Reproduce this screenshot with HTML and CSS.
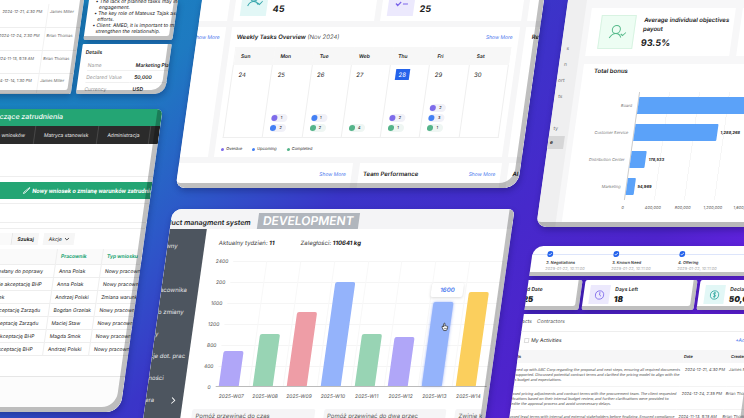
FILE: index.html
```html
<!DOCTYPE html>
<html lang="en">
<head>
    <meta charset="UTF-8">
    <meta name="viewport" content="width=device-width, initial-scale=1.0">
    <title>Dashboards</title>
    <link rel="stylesheet" href="styles.css">
</head>
<body>

<main class="wall">

    <!-- left column -->
    <div class="column column-left">
        <div class="split">
            <section class="panel log-panel">
                <table class="log-table">
                    <tr><td>2024-12-21, 4:30 PM</td><td>James Miller</td></tr>
                    <tr><td>2024-12-24, 2:30 PM</td><td>Brian Thomas</td></tr>
                    <tr><td>2024-11-13, 9:15 AM</td><td>Brian Thomas</td></tr>
                    <tr><td>2024-12-14, 1:30 PM</td><td>James Miller</td></tr>
                </table>
            </section>
            <div class="split-right">
                <section class="panel notes-panel">
                    <ul>
                        <li>The lack of planned tasks may indicate a<br>engagement.</li>
                        <li>The key role of Mateusz Tajak as the sales<br>efforts.</li>
                        <li>Client: AMED, it is important to maintain c<br>strengthen the relationship.</li>
                    </ul>
                </section>
                <section class="panel details-panel">
                    <h2>Details</h2>
                    <dl>
                        <dt>Name</dt><dd>Marketing Platform</dd>
                        <dt>Declared Value</dt><dd>50,000</dd>
                        <dt>Currency</dt><dd>USD</dd>
                    </dl>
                </section>
            </div>
        </div>

        <section class="panel hr-panel">
            <header class="hr-header">czące zatrudnienia</header>
            <nav class="hr-nav">
                <a href="#">Lista wniosków</a>
                <a href="#">Matryca stanowisk</a>
                <a href="#">Administracja</a>
            </nav>
            <div class="hr-space"></div>
            <button class="hr-new">
                <svg width="7" height="7" viewBox="0 0 14 14"><path d="M1 13l1-3 10-9 1 1-9 10z" fill="none" stroke="#fff" stroke-width="1.5"/></svg>
                Nowy wniosek o zmianę warunków zatrudnienia
            </button>
            <div class="hr-line"></div>
            <div class="hr-search">
                <input type="text" aria-label="Szukaj wniosku">
                <button class="search-button">Szukaj</button>
                <button class="actions-button">Akcje
                    <svg width="5" height="4" viewBox="0 0 10 8"><path d="M1 2l4 4 4-4" fill="none" stroke="#333" stroke-width="1.6"/></svg>
                </button>
            </div>
            <table class="hr-table">
                <tr><th></th><th>Pracownik</th><th>Typ wniosku</th></tr>
                <tr><td>Nie odesłany do poprawy</td><td>Anna Polak</td><td>Nowy pracownik</td></tr>
                <tr><td>Oczekuje akceptację BHP</td><td>Anna Polak</td><td>Nowy pracownik</td></tr>
                <tr><td>Przypadek</td><td>Andrzej Polski</td><td>Zmiana warunków</td></tr>
                <tr><td>Czeka akceptację Zarządu</td><td>Bogdan Grzelak</td><td>Nowy pracownik</td></tr>
                <tr><td>Czeka akceptację Zarządu</td><td>Maciej Staw</td><td>Nowy pracownik</td></tr>
                <tr><td>Oczekuje akceptację BHP</td><td>Magda Smok</td><td>Nowy pracownik</td></tr>
                <tr><td>Oczekuje akceptację BHP</td><td>Andrzej Polski</td><td>Nowy pracownik</td></tr>
            </table>
            <div class="hr-footer"></div>
        </section>
    </div>

    <!-- middle column -->
    <div class="column column-middle">
        <section class="panel tasks-panel">
            <div class="tasks-side">
                <div class="card stat-blank"></div>
                <div class="card side-card"><a class="more" href="#">Show More</a></div>
            </div>
            <div class="tasks-main">
                <div class="stats">
                    <div class="card stat">
                        <div class="stat-icon teal">
                            <svg width="16" height="16" viewBox="0 0 32 32" fill="none" stroke="#35a5ab" stroke-width="2"><circle cx="14" cy="10" r="8"/><path d="M3 28c2-6 6-9 11-9s8 3 9 6M22 22l4 3 6-7"/></svg>
                        </div>
                        <strong>45</strong>
                    </div>
                    <div class="card stat">
                        <div class="stat-icon violet">
                            <svg width="16" height="16" viewBox="0 0 32 32" fill="none" stroke="#7c66ea" stroke-width="2.4"><path d="M5 8l4 4 6-7M19 9h10M5 23l4 4 6-7M19 24h10"/></svg>
                        </div>
                        <strong>25</strong>
                    </div>
                </div>
                <div class="card calendar-card">
                    <div class="card-head">
                        <h2>Weekly Tasks Overview <span>(Nov 2024)</span></h2>
                        <a class="more" href="#">Show More</a>
                    </div>
                    <table class="calendar">
                        <tr><th>Sun</th><th>Mon</th><th>Tue</th><th>Web</th><th>Thu</th><th>Fri</th><th>Sat</th></tr>
                        <tr>
                            <td><div class="day"><span class="date">24</span></div></td>
                            <td><div class="day"><span class="date">25</span><span class="pill overdue">1</span><span class="pill upcoming">2</span></div></td>
                            <td><div class="day"><span class="date">26</span><span class="pill upcoming">1</span><span class="pill completed">2</span></div></td>
                            <td><div class="day"><span class="date">27</span><span class="pill completed">4</span></div></td>
                            <td><div class="day"><span class="date today">28</span><span class="pill overdue">2</span><span class="pill completed">1</span></div></td>
                            <td><div class="day"><span class="date">29</span><span class="pill overdue">2</span><span class="pill upcoming">3</span><span class="pill completed">1</span></div></td>
                            <td><div class="day"><span class="date">30</span></div></td>
                        </tr>
                    </table>
                    <div class="legend">
                        <span class="overdue">Overdue</span>
                        <span class="upcoming">Upcoming</span>
                        <span class="completed">Completed</span>
                    </div>
                </div>
            </div>
            <div class="tasks-edge">
                <div class="card stat-blank"></div>
                <div class="card side-card"><h2>Re</h2></div>
            </div>
            <div class="tasks-bottom">
                <div class="card card-head"><a class="more" href="#">Show More</a></div>
                <div class="card card-head"><h2>Team Performance</h2><a class="more" href="#">Show More</a></div>
                <div class="card card-head"><h2>AI</h2></div>
            </div>
        </section>

        <section class="panel product-panel">
            <header class="product-header">
                <h2>Product managment system</h2>
                <span class="env">DEVELOPMENT</span>
            </header>
            <div class="product-body">
                <nav class="product-nav">
                    <a href="#">Plan główny</a>
                    <a href="#"></a>
                    <a href="#">Karta pracownika</a>
                    <a href="#">Wnioski o zmiany</a>
                    <a href="#">Kontrakty</a>
                    <a href="#">Informacje dot. prac</a>
                    <a href="#">Nieobecności</a>
                    <a href="#">Nowa sfera
                        <svg width="5" height="7" viewBox="0 0 10 14"><path d="M2 1l6 6-6 6" fill="none" stroke="#fff" stroke-width="2"/></svg>
                    </a>
                </nav>
                <div class="product-main">
                    <div class="figures">
                        <span>Aktualny tydzień: <b>11</b></span>
                        <span>Zaległości: <b>110641 kg</b></span>
                    </div>
                    <div class="chart">
                        <div class="scale">
                            <span>2400</span><span>200</span><span>1600</span><span>1200</span><span>800</span><span>400</span><span>0</span>
                        </div>
                        <div class="bars">
                            <div class="bar-slot"><div class="bar lilac" style="height: 28%"></div></div>
                            <div class="bar-slot"><div class="bar mint" style="height: 42%"></div></div>
                            <div class="bar-slot"><div class="bar rose" style="height: 59%"></div></div>
                            <div class="bar-slot"><div class="bar sky" style="height: 83%"></div></div>
                            <div class="bar-slot"><div class="bar mint" style="height: 42%"></div></div>
                            <div class="bar-slot"><div class="bar lilac" style="height: 39%"></div></div>
                            <div class="bar-slot">
                                <div class="bar sky active" style="height: 67%">
                                    <span class="tip">1600</span>
                                    <svg class="hand" width="8" height="10" viewBox="0 0 18 20"><path d="M5 10V3a1.500 1.500 0 0 1 3 0v5l1-1 2 1 2 0 2 1v5l-2 4H7l-4-6-1-3 2-1z" fill="#fff" stroke="#222" stroke-width="1.500"/><path d="M8 12v3M10.500 12v3M13 12v3" stroke="#222"/></svg>
                                </div>
                            </div>
                            <div class="bar-slot"><div class="bar gold" style="height: 75%"></div></div>
                        </div>
                    </div>
                    <div class="weeks">
                        <span>2025-W07</span><span>2025-W08</span><span>2025-W09</span><span>2025-W10</span><span>2025-W11</span><span>2025-W12</span><span>2025-W13</span><span>2025-W14</span>
                    </div>
                    <div class="tiles">
                        <div>Pomóż przewinąć do czas</div>
                        <div>Pomóż przewinąć do dwa przec</div>
                        <div>Zwinię k</div>
                    </div>
                </div>
            </div>
        </section>
    </div>

    <!-- right column -->
    <div class="column column-right">
        <section class="panel bonus-panel">
            <nav class="bonus-nav">
                <a href="#">s</a>
                <a href="#">n</a>
                <a href="#">ort</a>
                <a href="#">ts</a>
                <a href="#"></a>
                <a href="#">ty</a>
                <a href="#" class="selected">e</a>
            </nav>
            <div class="bonus-main">
                <div class="payouts">
                    <div class="card payout">
                        <div class="payout-icon">
                            <svg width="18" height="16" viewBox="0 0 36 32" fill="none" stroke="#55b98a" stroke-width="2"><circle cx="15" cy="11" r="8"/><path d="M3 28c3-6 7-9 12-9s9 3 11 8M25 20l4 3 6-6"/></svg>
                        </div>
                        <div class="payout-text">
                            <p>Average individual objectives payout</p>
                            <strong>93.5%</strong>
                        </div>
                    </div>
                    <div class="card payout-next"></div>
                </div>
                <div class="card bonus-card">
                    <h2>Total bonus</h2>
                    <div class="hchart">
                        <span class="hlabel">Board</span>
                        <div class="hrow"><div class="hbar" style="width: 100%"></div></div>
                        <span class="hlabel">Customer Service</span>
                        <div class="hrow"><div class="hbar" style="width: 55%"></div><b>1,288,268</b></div>
                        <span class="hlabel">Distribution Center</span>
                        <div class="hrow"><div class="hbar" style="width: 10%"></div><b>178,533</b></div>
                        <span class="hlabel">Marketing</span>
                        <div class="hrow"><div class="hbar" style="width: 5%"></div><b>54,969</b></div>
                    </div>
                    <div class="hticks">
                        <span>0</span><span>400,000</span><span>800,000</span><span>1,200,000</span><span>1,600,000</span>
                    </div>
                </div>
            </div>
        </section>

        <section class="panel steps-panel">
            <ol class="steps">
                <li><svg width="6" height="6" viewBox="0 0 12 12"><circle cx="6" cy="6" r="6" fill="#2563eb"/><path d="M3 6l2 2 4-4" fill="none" stroke="#fff" stroke-width="1.400"/></svg>2. Negotiations<small>2025-01-22, 10:11:00</small></li>
                <li><svg width="6" height="6" viewBox="0 0 12 12"><circle cx="6" cy="6" r="6" fill="#2563eb"/><path d="M3 6l2 2 4-4" fill="none" stroke="#fff" stroke-width="1.400"/></svg>3. Known Need<small>2025-01-22, 10:11:00</small></li>
                <li><svg width="6" height="6" viewBox="0 0 12 12"><circle cx="6" cy="6" r="6" fill="#2563eb"/><path d="M3 6l2 2 4-4" fill="none" stroke="#fff" stroke-width="1.400"/></svg>4. Offering<small>2025-01-22, 10:11:00</small></li>
            </ol>
        </section>

        <div class="facts">
            <section class="panel fact fact-first">
                <div><p>Closed Date</p><strong>2025</strong></div>
            </section>
            <section class="panel fact">
                <div class="fact-icon violet">
                    <svg width="10" height="10" viewBox="0 0 24 24" fill="none" stroke="#7c66ea" stroke-width="2"><circle cx="12" cy="12" r="10"/><path d="M12 5v7l4 3"/></svg>
                </div>
                <div><p>Days Left</p><strong>18</strong></div>
            </section>
            <section class="panel fact">
                <div class="fact-icon teal">
                    <svg width="10" height="10" viewBox="0 0 24 24" fill="none" stroke="#2fa8a0" stroke-width="2"><circle cx="12" cy="12" r="10"/><path d="M15 8c-2-2-6-1-6 1s6 3 6 5-4 3-6 1M12 5v14"/></svg>
                </div>
                <div><p>Declared Value</p><strong>50,000</strong></div>
            </section>
        </div>

        <section class="panel activity-panel">
            <nav class="tabs"><a href="#">Contacts</a><a href="#">Contractors</a></nav>
            <div class="activity-bar">
                <label><input type="checkbox">My Activities</label>
                <a class="more" href="#">+Add</a>
            </div>
            <table class="activity-table">
                <tr><th>ls</th><th>Date</th><th>Created</th></tr>
                <tr>
                    <td>ned up with ABC Corp regarding the proposal and next steps, ensuring all required documents<br>supported. Discussed potential contract terms and clarified the pricing model to align with the<br>s budget and expectations.</td>
                    <td>2024-12-21, 4:30 PM</td><td>James Miller</td>
                </tr>
                <tr>
                    <td>ssed pricing adjustments and contract terms with the procurement team. The client requested<br>fications based on their internal budget review, and further clarifications were provided to<br>edite the approval process and avoid unnecessary delays.</td>
                    <td>2024-12-24, 2:35 PM</td><td>Brian Thomas</td>
                </tr>
                <tr>
                    <td>ussed legal terms with internal and external stakeholders before finalizing. Ensured compliance<br>with the company policy.</td>
                    <td>2024-11-13, 9:15 AM</td><td>Brian Thomas</td>
                </tr>
            </table>
        </section>
    </div>

</main>

</body>
</html>
```

FILE: styles.css
```css
* {
    box-sizing: border-box;
}

body {
    font-family: Inter, "Liberation Sans", sans-serif;
    margin: 0;
    min-height: 100vh;
    overflow: hidden;
    font-size: 5px;
    line-height: 6px;
    color: #222;
    background: linear-gradient(135deg, #1587bd 0%, #1e7ac1 20%, #2c5ac8 33%, #3a35c8 46%, #4629cb 63%, #4e23cc 77%, #6421e0 88%, #5a20d0 100%);
}

h2, p, ul, ol, dl, dd {
    margin: 0;
    padding: 0;
}

h2 {
    font-size: 6px;
    line-height: 8px;
    font-weight: 600;
    white-space: nowrap;
}

a {
    color: inherit;
    text-decoration: none;
}

svg {
    display: block;
    flex-shrink: 0;
}

table {
    border-collapse: collapse;
    table-layout: fixed;
}

th, td {
    padding: 0;
    text-align: left;
    white-space: nowrap;
}

button, input {
    font: inherit;
    color: inherit;
    border: none;
    border-radius: 0;
    margin: 0;
    padding: 0;
}

/* the whole wall leans to the right */
.wall {
    width: calc(100% + 60px);
    height: 100vh;
    display: grid;
    grid-template-columns: 178fr 342fr 236fr;
    gap: 24px;
    transform: skewX(-8deg);
    transform-origin: 0 0;
}

.column {
    display: flex;
    flex-direction: column;
    min-width: 0;
}

.panel {
    position: relative;
    background: #fff;
    overflow: hidden;
    flex-shrink: 0;
    box-shadow: 1px 3px 6px rgba(10, 10, 60, 0.3);
}

/* bevel on the right and bottom side */
.panel::after {
    content: "";
    position: absolute;
    inset: 0;
    border-radius: inherit;
    box-shadow: inset -5px -5px 0 rgba(0, 0, 0, 0.25);
    pointer-events: none;
}

.card {
    background: #fff;
    min-width: 0;
}

.more {
    color: #4a78ee;
    white-space: nowrap;
}

.teal { background: #e2f7f6; }
.violet { background: #ece9fd; }

/* log, notes and details */
.column-left {
    gap: 15px;
}

.split {
    display: grid;
    grid-template-columns: 84fr 89fr;
    gap: 5px;
}

.split-right {
    display: flex;
    flex-direction: column;
    gap: 4px;
    min-width: 0;
}

.log-panel {
    border-radius: 0 0 2px 0;
}

.log-table {
    width: 100%;
    margin-top: 4px;
    font-size: 4px;
    color: #666;
}

.log-table td {
    height: 23px;
    padding-bottom: 6px;
    border-bottom: 1px solid #eee;
}

.log-table td:first-child {
    width: 49px;
    padding-left: 4px;
    border-right: 1px solid #f2f2f2;
}

.log-table td:last-child {
    padding-left: 2px;
}

.log-table tr:last-child td {
    height: 20px;
    padding-bottom: 4px;
}

.notes-panel {
    border-radius: 0 0 2px 2px;
    height: 40px;
}

.notes-panel ul {
    list-style: none;
    margin-top: -2px;
    padding-left: 11px;
    white-space: nowrap;
}

.notes-panel li::before {
    content: "•";
    float: left;
    margin-left: -4px;
}

.details-panel {
    border-radius: 1px 1px 10px 2px;
    height: 50px;
    padding: 5px 4px;
}

.details-panel h2 {
    font-size: 5px;
    line-height: 7px;
}

.details-panel dl {
    display: grid;
    grid-template-columns: 44px 1fr;
    margin: 3px 0 0 4px;
}

.details-panel dt, .details-panel dd {
    line-height: 11px;
    height: 12px;
    padding-top: 1px;
    border-bottom: 1px solid #f0f0f0;
    white-space: nowrap;
}

.details-panel dt { color: #999; }
.details-panel dd { font-weight: 600; padding-left: 4px; }

/* HR requests */
.hr-panel {
    border-radius: 0 6px 14px 0;
}

.hr-header {
    background: #24a574;
    color: #fff;
    font-size: 7px;
    line-height: 16px;
    font-weight: 500;
    padding: 0 0 1px 16px;
}

.hr-nav {
    display: flex;
    background: #2b2b2b;
    color: #eee;
    font-size: 5px;
    line-height: 18px;
    white-space: nowrap;
}

.hr-nav a {
    padding: 0 9px;
    border-right: 1px solid #484848;
}

.hr-nav a:first-child {
    width: 54px;
    display: flex;
    justify-content: flex-end;
}

.hr-space {
    height: 33px;
    margin-bottom: 5px;
    border-bottom: 1px solid #eee;
}

.hr-new {
    display: flex;
    align-items: center;
    gap: 2px;
    width: 100%;
    height: 17px;
    padding-left: 50px;
    background: #24a574;
    color: #fff;
    font-family: Roboto, "Liberation Sans", sans-serif;
    font-size: 6px;
    font-weight: 700;
    white-space: nowrap;
}

.hr-line {
    height: 20px;
    margin: 4px 0 5px;
    border-top: 1px solid #eee;
    border-bottom: 1px solid #eee;
}

.hr-search {
    display: flex;
    height: 18px;
    padding: 4px 0 1px;
    border-top: 1px solid #eee;
}

.hr-search input {
    width: 46px;
    background: #fafafa;
    border-right: 1px solid #e6e6e6;
}

.hr-search button {
    background: #f6f6f6;
    padding: 0 5px;
}

.search-button {
    font-weight: 700;
    margin-right: 5px;
}

.actions-button {
    display: flex;
    align-items: center;
    gap: 2px;
}

.hr-table {
    width: 100%;
    margin-top: 3px;
}

.hr-table th, .hr-table td {
    height: 13px;
    padding-left: 4px;
    border-bottom: 1px solid #eee;
    border-left: 1px solid #eee;
}

.hr-table th {
    height: 15px;
    background: #fafafa;
    color: #24a574;
    font-weight: 700;
}

.hr-table th:first-child {
    width: 92px;
}

.hr-table td:first-child {
    padding-left: 20px;
}

.hr-table th:nth-child(2) {
    width: 46px;
}

.hr-footer {
    height: 36px;
    margin-top: 20px;
    border-top: 1px solid #e6e6e6;
    background: #fcfcfc;
}

/* weekly tasks */
.column-middle {
    gap: 21px;
}

.tasks-panel {
    display: grid;
    grid-template-columns: 28fr 288fr 14fr;
    gap: 6px;
    background: #f6f6f7;
    border-radius: 0 0 14px 9px;
}

.tasks-side, .tasks-main, .tasks-edge {
    display: grid;
    grid-template-columns: minmax(0, 1fr);
    grid-template-rows: 21px 130px;
    gap: 6px;
    min-width: 0;
}

.tasks-side .side-card {
    display: flex;
    justify-content: flex-end;
    padding: 7px 5px;
}

.tasks-edge .side-card {
    padding: 6px 7px;
}

.stats {
    display: grid;
    grid-template-columns: 1fr 1fr;
    gap: 6px;
}

.stat {
    display: flex;
    gap: 6px;
    padding: 0 6px;
}

.stat-icon {
    width: 26px;
    height: 16px;
    padding: 0 0 8px 5px;
    display: flex;
    align-items: flex-end;
}

.stat strong {
    font-size: 9px;
    line-height: 17px;
}

.calendar-card {
    padding: 6px 6px 0;
}

.card-head {
    display: flex;
    justify-content: space-between;
    align-items: center;
}

.card-head span {
    font-weight: 300;
}

.calendar {
    width: 100%;
    margin-top: 6px;
}

.calendar th, .calendar td {
    padding: 0 0 0 6px;
    border: 1px solid #efefef;
}

.calendar th {
    height: 17px;
    background: #f7f7f7;
    border-color: #f7f7f7;
    font-size: 5px;
    font-weight: 600;
}

.day {
    display: flex;
    flex-direction: column;
    align-items: flex-start;
    gap: 2px;
    height: 72px;
    padding: 4px 0 5px;
}

.date {
    font-size: 6px;
    line-height: 11px;
    margin-bottom: auto;
}

.today {
    background: #2563eb;
    color: #fff;
    padding: 0 3px;
}

.pill {
    display: flex;
    align-items: center;
    gap: 3px;
    width: 16px;
    height: 8px;
    border-radius: 4px;
    background: #f1f1f8;
    font-size: 4px;
}

.pill::before {
    content: "";
    width: 6px;
    height: 6px;
    border-radius: 50%;
}

.pill.completed { background: #eff6f3; }
.overdue::before { background: #7e6cea; }
.upcoming::before { background: #4480f4; }
.completed::before { background: #55b48a; }

.legend {
    display: flex;
    gap: 10px;
    padding-top: 8px;
    font-size: 4px;
}

.legend span {
    display: flex;
    align-items: center;
    gap: 2px;
}

.legend span::before {
    content: "";
    width: 3px;
    height: 3px;
    border-radius: 50%;
}

.tasks-bottom {
    grid-column: 1 / -1;
    display: grid;
    grid-template-columns: 173fr 142fr 12fr;
    gap: 7px;
}

.tasks-bottom .card {
    height: 25px;
    padding: 0 5px 4px;
}

.tasks-bottom .card:first-child {
    justify-content: flex-end;
}

/* product management */
.product-panel {
    border-radius: 9px 6px 0 0;
}

.product-header {
    display: flex;
    align-items: flex-end;
    gap: 7px;
    height: 20px;
    background: #f4f4f6;
}

.product-header h2 {
    font-size: 7px;
    line-height: 12px;
    margin-left: -15px;
}

.env {
    background: #b1b6bd;
    color: #fff;
    font-size: 12px;
    line-height: 16px;
    font-weight: 600;
    padding: 0 5px;
}

.product-body {
    display: flex;
}

.product-nav {
    width: 37px;
    background: #4d555f;
    color: #e4e6e8;
    font-size: 6px;
    padding-top: 6px;
    overflow: hidden;
}

.product-nav a {
    display: flex;
    justify-content: space-between;
    align-items: center;
    height: 22px;
    margin-left: -24px;
    padding-right: 7px;
    white-space: nowrap;
}

.product-main {
    flex: 1;
    min-width: 0;
    padding: 10px 3px 0 12px;
}

.figures {
    display: flex;
    gap: 26px;
    font-size: 6px;
    line-height: 8px;
    padding-left: 2px;
    color: #444;
}

.figures b {
    color: #222;
}

.chart {
    display: flex;
    gap: 5px;
    margin-top: 14px;
    height: 126px;
}

.scale {
    width: 14px;
    display: flex;
    flex-direction: column;
    justify-content: space-between;
    text-align: right;
    color: #555;
    margin: -3px 0;
}

.bars {
    flex: 1;
    display: grid;
    grid-template-columns: repeat(8, 1fr);
    border-bottom: 1px solid #bbb;
    background: repeating-linear-gradient(to bottom, #f5f5f5 0, #f5f5f5 1px, transparent 1px, transparent 21px);
}

.bar-slot {
    display: flex;
    align-items: flex-end;
    padding-left: 3px;
    border-right: 1px solid #f8f8f8;
}

.bar {
    position: relative;
    width: 20px;
    border-radius: 2px 2px 0 0;
}

.lilac { background: #b0a6f8; }
.mint { background: #98d4b4; }
.rose { background: #ee9da6; }
.sky { background: #94b3fb; }
.gold { background: #fbcf5d; }

.active {
    box-shadow: 0 0 3px rgba(70, 110, 240, 0.5);
}

.tip {
    position: absolute;
    left: -4px;
    bottom: calc(100% + 5px);
    width: 32px;
    font-size: 6px;
    line-height: 14px;
    text-align: center;
    background: #fff;
    color: #3f74ee;
    font-weight: 600;
    border-radius: 2px;
    box-shadow: 0 1px 3px rgba(0, 0, 0, 0.15);
}

.hand {
    position: absolute;
    left: 11px;
    top: 20px;
}

.weeks {
    display: grid;
    grid-template-columns: repeat(8, 1fr);
    margin: 6px 0 0 19px;
    text-align: center;
    color: #555;
    white-space: nowrap;
}

.tiles {
    display: grid;
    grid-template-columns: 123fr 123fr 28fr;
    gap: 9px;
    margin: 10px 0 0 -1px;
    font-size: 6px;
    line-height: 13px;
    color: #555;
}

.tiles div {
    background: #f5f5f6;
    padding: 0 4px 20px;
    border-radius: 2px;
    white-space: nowrap;
    overflow: hidden;
}

/* bonus */
.bonus-panel {
    display: flex;
    background: #f7f7f8;
    border-radius: 0 0 0 10px;
    margin-bottom: 19px;
}

.bonus-nav {
    width: 19px;
    background: #efeff0;
    color: #777;
    padding-top: 40px;
    text-align: right;
}

.bonus-nav a {
    display: block;
    height: 16px;
    line-height: 16px;
    padding-right: 11px;
}

.bonus-nav .selected {
    height: 13px;
    line-height: 13px;
    background: #d6d6d7;
    color: #222;
    font-weight: 700;
    margin-right: 3px;
}

.bonus-main {
    flex: 1;
    min-width: 0;
    padding: 8px 0 5px 6px;
}

.payouts {
    display: grid;
    grid-template-columns: 144fr 60fr;
    gap: 7px;
    margin-bottom: 8px;
}

.payout {
    display: flex;
    gap: 8px;
    padding: 7px 0 7px 11px;
}

.payout-icon {
    width: 35px;
    height: 34px;
    background: #edfdf3;
    border: 1px solid #d8f3e2;
    display: flex;
    align-items: center;
    justify-content: center;
}

.payout-text {
    flex: 1;
    display: flex;
    flex-direction: column;
    justify-content: space-between;
}

.payout-text p {
    font-size: 6px;
    line-height: 9px;
    font-weight: 600;
}

.payout-text strong {
    font-size: 9px;
    line-height: 12px;
}

.bonus-card {
    padding: 3px 0 11px;
}

.bonus-card h2 {
    font-size: 6px;
    margin-left: 11px;
}

.hchart {
    display: grid;
    grid-template-columns: 59px 1fr;
    margin-top: 17px;
    font-size: 4px;
}

.hlabel {
    line-height: 27px;
    padding-right: 5px;
    text-align: right;
    color: #777;
}

.hrow {
    display: flex;
    align-items: center;
    gap: 3px;
    height: 27px;
    border-left: 1px solid #ccc;
    background: repeating-linear-gradient(to right, transparent 0, transparent 29px, #f6f6f6 29px, #f6f6f6 30px);
}

.hbar {
    height: 17px;
    background: #5ba2f9;
    border-radius: 0 1px 1px 0;
}

.hticks {
    display: grid;
    grid-template-columns: repeat(5, 30px);
    margin-left: 44px;
    padding-top: 5px;
    font-size: 4px;
    text-align: center;
    color: #666;
}

/* deal */
.steps-panel {
    border-radius: 10px 0 0 0;
    margin-bottom: 4px;
}

.steps {
    display: grid;
    grid-template-columns: repeat(3, 66px);
    list-style: none;
    padding: 5px 0 4px 15px;
    font-size: 4px;
    font-weight: 500;
    background: linear-gradient(#dde5fb, #dde5fb) 0 8px / 100% 1px no-repeat;
}

.steps svg {
    margin: 0 0 3px;
}

.steps small {
    display: block;
    font-size: 4px;
    font-weight: 400;
    color: #aaa;
}

.facts {
    display: flex;
    gap: 3px;
    margin-bottom: 4px;
}

.fact {
    display: flex;
    gap: 5px;
    width: 112px;
    height: 30px;
    padding: 5px 6px;
    border-radius: 2px;
    font-weight: 600;
}

.fact-first {
    width: 54px;
    padding-left: 0;
    border-radius: 0 2px 2px 0;
}

.fact-first div {
    margin-left: -14px;
}

.fact p {
    line-height: 8px;
}

.fact strong {
    font-size: 8px;
    line-height: 12px;
}

.fact-icon {
    width: 20px;
    height: 19px;
    display: flex;
    align-items: center;
    justify-content: center;
}

.steps-panel::after, .fact::after, .split .panel::after {
    box-shadow: inset -4px -4px 0 rgba(0, 0, 0, 0.25);
}

.activity-panel {
    height: 160px;
}

.tabs {
    display: flex;
    gap: 5px;
    margin-left: -12px;
    line-height: 15px;
    height: 17px;
    color: #555;
}

.activity-bar {
    display: flex;
    justify-content: space-between;
    align-items: center;
    height: 19px;
    padding: 0 8px 2px 4px;
    border-top: 1px solid #eee;
}

.activity-bar label {
    display: flex;
    align-items: center;
    gap: 2px;
}

.activity-bar input {
    appearance: none;
    width: 5px;
    height: 5px;
    border: 1px solid #ddd;
}

.activity-table {
    width: 100%;
    font-size: 4px;
    line-height: 5px;
    color: #555;
}

.activity-table th {
    height: 13px;
    background: #f6f6f7;
    color: #222;
    font-weight: 600;
}

.activity-table th:first-child {
    width: 166px;
}

.activity-table th:nth-child(2) {
    width: 47px;
}

.activity-table td {
    height: 23px;
    padding-top: 4px;
    vertical-align: top;
    border-bottom: 1px solid #f3f3f3;
}

.activity-table td:first-child {
    font-family: Lato, "Liberation Sans", sans-serif;
}

.activity-table td:nth-child(2) {
    padding-left: 3px;
}
```
